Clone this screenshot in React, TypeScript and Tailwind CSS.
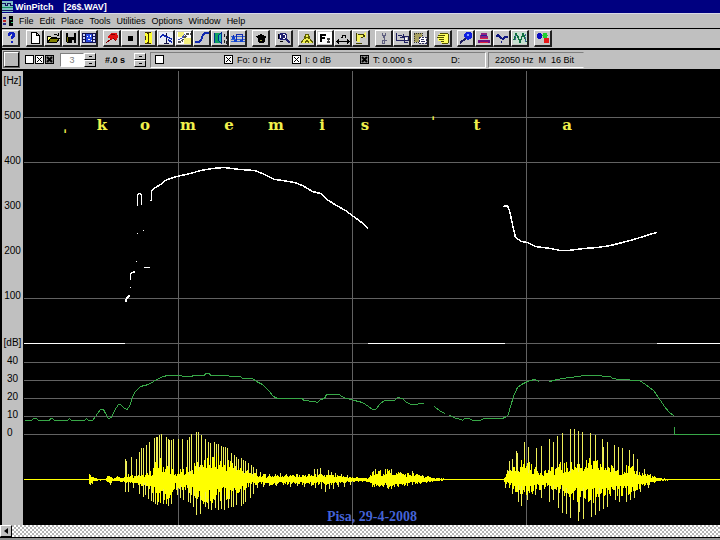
import React, { useMemo } from 'react';
import clsx from 'clsx';

type Point = [number, number];
type Band = [number, number, number];

const MENU_ITEMS = ['File', 'Edit', 'Place', 'Tools', 'Utilities', 'Options', 'Window', 'Help'];

// Glyphs are drawn on a 14x12 grid
const ICONS: Record<string, React.ReactNode> = {
  Help: <path d="M5 4V2h1V1h3v1h1v2H9v1H8v2M8 9v2" stroke="#1020c0" strokeWidth="2" />,
  New: <path d="M3.5 .5h5l3 3v8h-8zM8.5 .5v3h3" fill="#fff" stroke="#000" />,
  Open: (
    <>
      <path d="M1.5 10.5v-6h3l1 1h5v2" fill="#ffff80" stroke="#000" />
      <path d="M1.5 10.5l3-4h9l-3 4z" fill="#808000" stroke="#000" />
      <path d="M8 2.5h2l2 1M12 1v3" stroke="#000" />
    </>
  ),
  Save: (
    <>
      <path d="M2 1h10v10H3l-1-1z" fill="#000" />
      <path d="M4 1h6v4H4zM8 8h2v3H8z" fill="#c0c0c0" />
      <path d="M3 5h1v5H3z" fill="#707000" />
    </>
  ),
  Table: (
    <>
      <path d="M0 1h14v10H0z" fill="#101050" />
      <path d="M1 2h2v2H1zM1 5h2v2H1zM1 8h2v2H1zM11 2h2v2h-2zM11 5h2v2h-2zM11 8h2v2h-2z" fill="#d0d8ff" />
      <path d="M4 2h6v8H4z" fill="#2848e0" />
      <path d="M5 4h1v1H5zM8 3h1v2H8zM6 7h2v1H6zM9 8h1v1H9z" fill="#fff" />
    </>
  ),
  Pin: (
    <>
      <path d="M1 11l5-4" stroke="#800000" strokeWidth="1" />
      <path d="M4 3l3-2h5l1 3-1 4-2 1-2-2-2 1-1-2H3z" fill="#e01010" />
      <path d="M8 6l3 3M6 3l4-1" stroke="#800000" />
    </>
  ),
  Stop: <path d="M5 4h5v5H5z" fill="#000" />,
  Cursor: (
    <>
      <path d="M4 0h7v12H4z" fill="#ffff30" />
      <path d="M4 .5h2l1 1 1-1h2M7 2v8M4 11.5h2l1-1 1 1h2M4 4v4" stroke="#403000" />
    </>
  ),
  Split: (
    <>
      <path d="M0 0h14v12H0z" fill="#e8ecf4" />
      <path d="M7.500 1v10M5 11.500h5" stroke="#101040" />
      <path d="M1 5l3-2 4 2 5 2M9 8l4 2" stroke="#1028b0" strokeWidth="1.500" />
    </>
  ),
  Highlight: (
    <>
      <path d="M0 0h14v12H0z" fill="#fff" />
      <path d="M7 6h7v6H7zM1 0h6v5H1z" fill="#f4f080" />
      <path d="M1 10h3l4-5 2-3h4" stroke="#505050" strokeWidth="2" strokeDasharray="3 1" />
      <path d="M1 8l4-2 3-4" stroke="#4050c0" />
    </>
  ),
  Curve: <path d="M0 10h4l2-2 2-5 2-2h4" stroke="#1028b0" strokeWidth="2" />,
  Speaker: (
    <>
      <path d="M1 1h8v10H1z" fill="#10a060" />
      <path d="M1 1v10M8 1L5 4v4l3 3z" stroke="#003090" fill="#20c0b0" />
      <path d="M11 2v3M13 4v3M11 8v3M13 9v3" stroke="#202020" />
    </>
  ),
  Notes: (
    <>
      <path d="M0 4h14M0 7h14M0 9.5h14" stroke="#3060d0" />
      <path d="M5 9V2h6v7M2 3v4" stroke="#1028b0" />
      <path d="M3 8h3v2H3zM9 8h3v2H9zM1 5h3v2H1z" fill="#1040d0" />
    </>
  ),
  Tutor: (
    <>
      <path d="M1 5l6-3 6 3-2 1v4l-2 1H6l-2-1V6z" fill="#000" />
      <path d="M6 8h2v1H6z" fill="#a0a040" />
    </>
  ),
  Search: (
    <>
      <circle cx="6" cy="4.500" r="3.500" fill="#fff" stroke="#202070" />
      <path d="M9 7l4 4M5 2v5M7 3v3" stroke="#202070" strokeWidth="1.500" />
      <path d="M1 2v5M3 9h3" stroke="#000" />
    </>
  ),
  Tripod: <path d="M1 11l3-4 2-5h2l2 5 3 4M4 7l3-2 3 2M5 11l2-3 2 3" stroke="#606000" fill="#f0f050" />,
  Font: (
    <>
      <path d="M0 0h14v12H0z" fill="#fff" />
      <path d="M2 2h2v8H2zM4 2h4v2H4zM4 5h3v2H4z" fill="#000" />
      <path d="M9 6h3v2h-1v1h1v2H9V9h1V8H9z" fill="#404040" />
    </>
  ),
  Width: (
    <>
      <path d="M1 9.500h12M3 7.500l-2 2 2 2M11 7.500l2 2-2 2" stroke="#000" />
      <path d="M5 5h1V3h3v2h1" stroke="#000" />
    </>
  ),
  Lamp: (
    <>
      <path d="M3 2h6l3-2v6l-3-1H6v5H3z" fill="#f4f060" />
      <path d="M2.500 1v8M2 11h6M4 2h4l3 2-4 2" stroke="#404000" />
    </>
  ),
  Cut: <path d="M5 1l2 5 2-5M7 6v2M5 8h2v3H5zM8 8h2" stroke="#606080" />,
  Copy: (
    <>
      <path d="M1.500 1v7h3M5 5.500h3l1-3M3 3h3l2 2M5 8h8V4H9v6h4" stroke="#202060" />
      <path d="M10 6h2v2h-2z" fill="#fff" />
    </>
  ),
  Paste: (
    <>
      <path d="M1 1h8v9H1z" fill="#a8a060" />
      <path d="M1 1h8v9H1z" stroke="#303030" strokeDasharray="1 1" />
      <path d="M6 5h7v6H6z" fill="#fff" stroke="#303060" strokeDasharray="2 1" />
      <path d="M8 7h3M8 9h4" stroke="#303060" />
    </>
  ),
  Undo: (
    <>
      <path d="M4 1h7l1 1v8l-1 1H5V9H2V4z" fill="#ffff60" />
      <path d="M4 1.500h7l1.500 1v8l-1.500 1H6M2 3.500h7M1 5.500h7M3 7.500h5M5 9.500h3" stroke="#505000" />
    </>
  ),
  Marker: (
    <>
      <path d="M7 6l-6 5" stroke="#202060" strokeWidth="2" />
      <path d="M5 2l3-2h3l2 2v3l-2 2-3 1-3-3z" fill="#1020e0" />
      <path d="M8 2h2v2H8z" fill="#80a0ff" />
    </>
  ),
  Hat: (
    <>
      <path d="M4 1h6l1 5H3z" fill="#902080" />
      <path d="M1 8h12v3H1z" fill="#701080" />
      <path d="M3 6.500h8M3 10.500h8" stroke="#e02040" />
      <path d="M4 3.500h6" stroke="#2020a0" />
    </>
  ),
  Wave: <path d="M1 5l2-2 3 3 2 1 2-2 3 0M6 10h1" stroke="#101880" strokeWidth="2" />,
  Spectrum: (
    <>
      <path d="M0 0h14v12H0z" fill="#c8e0d0" />
      <path d="M1 8l2-6 2 3 2 5 3-8 2 4 1 4" stroke="#107040" strokeWidth="1.500" />
      <path d="M2 3v6M12 2v8" stroke="#4060a0" strokeDasharray="2 1" />
    </>
  ),
  Colors: (
    <>
      <circle cx="3.500" cy="4" r="2.800" fill="#1010c0" />
      <circle cx="9" cy="3.500" r="2.600" fill="#20d030" />
      <circle cx="10.500" cy="8.500" r="2.900" fill="#e81818" />
    </>
  ),
};

const TOOL_GROUPS = [
  ['New', 'Open', 'Save', 'Table'],
  ['Pin', 'Stop', 'Cursor', 'Split', 'Highlight', 'Curve', 'Speaker', 'Notes'],
  ['Tutor'],
  ['Search'],
  ['Tripod', 'Font', 'Width', 'Lamp'],
  ['Cut', 'Copy', 'Paste'],
  ['Undo'],
  ['Marker', 'Hat', 'Wave', 'Spectrum'],
  ['Colors'],
];

// Plot coordinates, x 24-720 and y 71-525
const PITCH: Point[][] = [
  [[125, 302], [126, 298], [128, 296], [129, 295]],
  [[129, 287], [130, 287]],
  [[130, 279], [130, 273], [132, 272], [135, 271]],
  [[135, 261], [136, 261]],
  [[136, 233], [137, 233]],
  [[142, 230], [143, 230]],
  [[143, 267], [149, 267]],
  [[137, 205], [137, 195], [138, 193], [140, 193], [141, 195], [141, 204]],
  [[149, 200], [151, 200], [151, 190], [155, 187], [160, 184], [165, 180], [170, 178], [176, 176], [190, 173], [200, 170], [212, 168], [223, 167], [240, 169], [254, 170], [262, 173], [270, 177], [274, 179], [282, 180], [294, 182], [302, 185], [312, 191], [320, 193], [328, 200], [336, 205], [345, 210], [353, 216], [360, 221], [368, 228]],
  [[503, 206], [507, 205], [509, 210], [512, 224], [515, 237], [521, 241], [527, 242], [535, 246], [550, 248], [560, 250], [568, 250], [583, 248], [597, 247], [610, 245], [622, 242], [633, 239], [643, 236], [652, 233], [657, 232]],
];

const INTENSITY: Point[][] = [
  [[24, 420], [31, 420], [33, 418], [36, 418], [38, 420], [49, 420], [50, 418], [52, 418], [54, 420], [67, 420], [69, 418], [71, 420], [84, 420], [86, 418], [88, 420], [92, 420], [95, 416], [97, 413], [100, 409], [103, 409], [105, 413], [108, 418], [111, 417], [114, 410], [118, 404], [120, 404], [123, 407], [126, 409], [128, 408], [130, 403], [132, 396], [135, 391], [140, 386], [148, 384], [153, 381], [158, 378], [163, 376], [167, 375], [180, 375], [183, 376], [190, 376], [194, 375], [204, 375], [205, 373], [209, 373], [210, 375], [228, 375], [229, 376], [240, 376], [242, 378], [252, 378], [256, 381], [262, 384], [268, 390], [273, 396], [277, 398], [302, 398], [303, 400], [314, 401], [317, 402], [320, 399], [324, 398], [326, 394], [339, 394], [341, 396], [346, 398], [351, 399], [354, 400], [362, 402], [368, 406], [372, 409], [375, 409], [380, 403], [384, 400], [394, 400], [397, 397], [402, 398], [406, 402], [411, 404], [424, 403]],
  [[434, 406], [440, 411], [445, 413]],
  [[449, 415], [456, 418], [461, 419], [462, 420], [464, 418], [469, 418], [472, 420], [480, 420], [483, 418], [502, 418], [506, 416], [508, 414], [510, 406], [513, 396], [517, 387], [521, 384], [527, 381], [530, 380], [534, 379], [539, 381]],
  [[549, 381], [557, 379], [568, 377], [580, 376], [581, 375], [592, 375], [610, 376], [612, 378], [619, 379], [639, 380], [645, 384], [653, 390], [658, 397], [664, 406], [668, 411], [674, 416]],
  [[674, 426], [674, 434], [720, 434]],
];

// Dense part of the signal: x, height above zero line, depth below it
const CORE: Band[] = [
  [24, 0, 0], [88, 0, 0], [89, 4, 5], [91, 4, 4], [94, 1, 1], [105, 0, 0], [107, 3, 2], [110, 3, 4], [113, 1, 1], [117, 3, 1], [120, 1, 2], [122, 1, 2], [124, 5, 3], [135, 3, 3], [148, 5, 8], [152, 10, 13], [158, 20, 20], [165, 14, 22], [171, 12, 18], [174, 5, 8], [185, 11, 9], [190, 9, 12], [196, 16, 18], [205, 18, 22], [215, 22, 18], [230, 17, 18], [240, 12, 12], [250, 6, 5], [262, 4, 4], [300, 4, 4], [330, 4, 5], [350, 2, 2], [368, 1, 2], [372, 6, 6], [385, 9, 8], [400, 6, 6], [415, 5, 4], [425, 3, 3], [435, 1, 1], [450, 0, 0], [503, 0, 0], [505, 4, 4], [515, 12, 10], [524, 20, 15], [530, 14, 14], [537, 9, 9], [548, 9, 7], [560, 14, 12], [575, 15, 18], [590, 18, 21], [600, 16, 18], [615, 11, 14], [630, 12, 15], [636, 8, 12], [643, 6, 7], [650, 4, 4], [658, 1, 1], [674, 0, 0], [720, 0, 0],
];

const PEAKS: Point[] = [
  [89, 4], [107, 3], [125, 20], [126, 18], [131, 22], [136, 20], [139, 27], [141, 31], [143, 31], [146, 34], [149, 37], [154, 41], [156, 42], [157, 42], [159, 44], [161, 45], [166, 42], [168, 40], [169, 39], [171, 39], [173, 40], [178, 40], [182, 40], [187, 39], [189, 42], [191, 45], [196, 47], [198, 47], [201, 44], [205, 40], [208, 37], [210, 36], [214, 37], [216, 35], [218, 35], [221, 33], [223, 32], [225, 32], [227, 31], [231, 26], [234, 24], [236, 22], [238, 20], [241, 21], [243, 19], [245, 18], [248, 16], [251, 14], [253, 12], [256, 10], [260, 7], [265, 5], [269, 5], [275, 5], [280, 6], [286, 5], [292, 4], [297, 5], [303, 4], [308, 5], [314, 10], [317, 10], [320, 11], [324, 4], [328, 9], [331, 7], [335, 6], [341, 5], [347, 4], [373, 8], [375, 10], [379, 8], [385, 10], [391, 10], [400, 7], [412, 8], [422, 4], [507, 9], [509, 18], [512, 20], [516, 28], [517, 26], [524, 37], [528, 32], [536, 31], [541, 33], [549, 40], [553, 37], [557, 43], [562, 46], [570, 50], [574, 50], [578, 48], [582, 47], [590, 46], [595, 44], [602, 40], [603, 32], [607, 37], [614, 34], [618, 32], [622, 31], [629, 29], [633, 25], [637, 20], [644, 10], [650, 5],
];

const TROUGHS: Point[] = [
  [90, 5], [110, 5], [125, 12], [128, 12], [133, 8], [139, 14], [143, 17], [145, 15], [148, 19], [151, 21], [153, 22], [155, 24], [157, 25], [160, 22], [163, 24], [168, 26], [171, 24], [177, 15], [180, 18], [183, 20], [188, 22], [190, 23], [193, 27], [196, 35], [200, 34], [205, 27], [208, 29], [211, 30], [215, 28], [218, 30], [221, 29], [224, 30], [228, 28], [231, 27], [233, 27], [236, 25], [241, 26], [243, 24], [245, 22], [250, 18], [253, 14], [257, 8], [263, 7], [269, 6], [276, 6], [283, 5], [290, 7], [297, 6], [304, 7], [311, 6], [315, 8], [321, 9], [325, 12], [329, 9], [333, 9], [338, 7], [344, 7], [350, 5], [372, 7], [387, 8], [394, 7], [412, 5], [505, 8], [512, 14], [518, 22], [521, 26], [527, 20], [535, 15], [541, 18], [549, 22], [553, 20], [558, 28], [562, 33], [566, 34], [570, 38], [578, 41], [579, 32], [583, 39], [591, 37], [595, 35], [599, 31], [603, 29], [607, 27], [615, 20], [619, 22], [626, 22], [630, 20], [634, 18], [640, 12], [648, 8], [654, 3],
];

const PHONES = [
  { char: 'ˌ', x: 65, y: 127 },
  { char: 'k', x: 102, y: 125 },
  { char: 'o', x: 145, y: 125 },
  { char: 'm', x: 188, y: 125 },
  { char: 'e', x: 229, y: 125 },
  { char: 'm', x: 276, y: 125 },
  { char: 'i', x: 322, y: 125 },
  { char: 's', x: 365, y: 125 },
  { char: 'ˈ', x: 433, y: 123 },
  { char: 't', x: 477, y: 125 },
  { char: 'a', x: 567, y: 125 },
];

const ZERO_Y = 479;

const toPath = (lines: Point[][]) =>
  lines.map((line) => 'M' + line.map(([x, y]) => `${x} ${y}`).join('L')).join('');

const jitter = (x: number) => {
  const v = Math.sin(x * 12.9898) * 43758.5453;
  return v - Math.floor(v);
};

const buildSignal = () => {
  let d = '';
  for (let x = 24; x < 720; x++) {
    const i = Math.max(1, CORE.findIndex((band) => band[0] > x));
    const [x0, up0, down0] = CORE[i - 1];
    const [x1, up1, down1] = CORE[i];
    const t = (x - x0) / (x1 - x0);
    const up = Math.round((up0 + (up1 - up0) * t) * (0.35 + 0.85 * jitter(x)));
    const down = Math.round((down0 + (down1 - down0) * t) * (0.4 + 0.8 * jitter(x + 900)));
    d += `M${x}.5 ${ZERO_Y - up}V${ZERO_Y + 1 + down}`;
  }
  return d;
};

const ToolButton: React.FC<{ name: string }> = ({ name }) => (
  <button
    type="button"
    aria-label={name}
    className="flex h-[17px] w-[18px] shrink-0 items-center justify-center border-t border-r-2 border-b-2 border-l border-t-white border-r-[#202020] border-b-[#202020] border-l-white bg-[#c8c8c8]"
  >
    <svg viewBox="0 0 14 12" className="h-3 w-[14px]" fill="none" shapeRendering="crispEdges">
      {ICONS[name]}
    </svg>
  </button>
);

const CheckBox: React.FC<{ label: string; text?: string; checked?: boolean; dark?: boolean }> = ({
  label,
  text,
  checked,
  dark,
}) => (
  <label className="flex items-center gap-1 whitespace-pre">
    <span className="grid">
      <input
        type="checkbox"
        aria-label={label}
        defaultChecked={checked}
        className={clsx(
          'peer col-start-1 row-start-1 size-[9px] appearance-none border border-black',
          dark ? 'bg-[#909090]' : 'bg-white'
        )}
      />
      <svg viewBox="0 0 9 9" className="pointer-events-none invisible col-start-1 row-start-1 size-[9px] peer-checked:visible">
        <path d="M2 2l5 5M7 2l-5 5" stroke="#000" strokeWidth={dark ? 2 : 1} />
      </svg>
    </span>
    {text}
  </label>
);

const Spinner: React.FC<{ label: string }> = ({ label }) => (
  <div className="flex w-3 flex-col">
    {['Increase', 'Decrease'].map((dir) => (
      <button
        key={dir}
        type="button"
        aria-label={`${dir} ${label}`}
        className="flex h-[7px] items-center justify-center border border-t-white border-r-black border-b-black border-l-white bg-[#c0c0c0]"
      >
        <span className="h-px w-[3px] bg-black" />
      </button>
    ))}
  </div>
);

const TitleBar = () => (
  <header className="flex h-[13px] items-center gap-[2px] bg-[#000080] text-[9px] leading-3 font-bold text-white">
    <svg viewBox="0 0 11 11" className="size-[11px]" shapeRendering="crispEdges">
      <path d="M0 0h11v11H0z" fill="#80c0c8" />
      <path d="M0 2h3v2h2V2h3v2h3M0 9h11" stroke="#101060" fill="none" />
      <path d="M0 6h11v1H0z" fill="#109060" />
    </svg>
    <h1 className="whitespace-pre">{'WinPitch    [26$.WAV]'}</h1>
  </header>
);

const MenuBar = () => (
  <nav className="flex h-[15px] items-center gap-[6px] border-t border-[#d8d8e8] text-[9px] leading-3">
    <svg viewBox="0 0 12 10" className="mr-[-1px] h-[10px] w-3" shapeRendering="crispEdges">
      <path d="M1 1h3v2H1zM1 7h3v2H1z" fill="#202080" />
      <path d="M1 4h3v2H1z" fill="#c02020" />
      <path d="M7 0h4v10H7z" fill="#000" />
      <path d="M8 3h2v1H8zM9 6h2v1H9z" fill="#30c070" />
    </svg>
    {MENU_ITEMS.map((item) => (
      <a key={item} href="#" className="text-black">
        {item}
      </a>
    ))}
  </nav>
);

const ToolBar = () => (
  <div className="flex h-[22px] items-center gap-[5px] border-t border-b-2 border-black">
    <div className="mr-px">
      <ToolButton name="Help" />
    </div>
    {TOOL_GROUPS.map((group, i) => (
      <div key={i} className="flex">
        {group.map((name) => (
          <ToolButton key={name} name={name} />
        ))}
      </div>
    ))}
  </div>
);

const StatusRow = () => (
  <div className="flex h-5 items-center border-b border-black text-[9px] leading-3 font-medium">
    <button
      type="button"
      aria-label="Mode"
      className="ml-[2px] size-[15px] border border-t-white border-r-black border-b-black border-l-white bg-[#b8b8b8] outline outline-[#606060]"
    />
    <div className="ml-[6px] flex gap-px">
      <CheckBox label="Grid" />
      <CheckBox label="Pitch" checked />
      <CheckBox label="Intensity" checked dark />
    </div>
    <input
      aria-label="Channel"
      defaultValue="3"
      className="ml-[6px] h-[14px] w-6 border border-t-[#808080] border-r-white border-b-white border-l-[#808080] bg-white text-center text-[#808080]"
    />
    <Spinner label="channel" />
    <span className="ml-[9px] w-[29px] font-bold">#.0 s</span>
    <Spinner label="time" />
    <div className="ml-1 flex h-4 w-[336px] items-center border border-t-[#808080] border-r-white border-b-white border-l-[#808080] pl-1">
      <div className="w-[69px]">
        <CheckBox label="Lock" />
      </div>
      <div className="w-[68px]">
        <CheckBox label="Frequency" text="Fo: 0 Hz" checked />
      </div>
      <div className="w-[68px]">
        <CheckBox label="Level" text="I: 0 dB" checked />
      </div>
      <div className="w-[91px]">
        <CheckBox label="Time" text="T: 0.000 s" checked dark />
      </div>
      <span>D:</span>
    </div>
    <div className="ml-[2px] flex h-4 w-24 items-center border border-t-[#808080] border-r-transparent border-b-white border-l-[#808080] pl-[6px] whitespace-pre">
      22050 Hz  M  16 Bit
    </div>
  </div>
);

const Axis = () => (
  <div className="flex w-[21px] shrink-0 flex-col bg-[#c0c0c0] text-center text-[10px]">
    <span className="flex h-[18px] items-center justify-center">[Hz]</span>
    <div className="mt-1">
      {[500, 400, 300, 200, 100].map((hz) => (
        <span key={hz} className="flex h-[45px] items-center justify-center">
          {hz}
        </span>
      ))}
    </div>
    <div className="mt-[15px]">
      <span className="flex h-[18px] items-center justify-center">[dB]</span>
      {[40, 30, 20, 10].map((db) => (
        <span key={db} className="flex h-[18px] items-center justify-center">
          {db}
        </span>
      ))}
      <span className="flex h-[18px] items-center pl-[5px]">0</span>
    </div>
  </div>
);

const Plot = () => {
  const signal = useMemo(buildSignal, []);

  return (
    <div className="relative ml-px h-[454px] min-w-0 flex-1 overflow-hidden bg-black">
      <svg
        viewBox="24 71 696 454"
        preserveAspectRatio="none"
        className="block h-full w-full"
        fill="none"
        shapeRendering="crispEdges"
      >
        <g stroke="#626262">
          {[117, 162, 298, 343, 362, 380, 398, 416, 434].map((y) => (
            <path key={y} d={`M24 ${y}.5H720`} />
          ))}
          {[178, 352, 526].map((x) => (
            <path key={x} d={`M${x}.5 71V525`} />
          ))}
        </g>
        <path d="M24 343.5H125M368 343.5H505M657 343.5H720" stroke="#fff" />
        <path d={toPath(PITCH)} transform="translate(0.5 0.5)" stroke="#fff" strokeWidth="1.5" />
        <path d={toPath(INTENSITY)} transform="translate(0.5 0.5)" stroke="#38a848" />
        <path
          d={
            PEAKS.map(([x, h]) => `M${x}.5 ${ZERO_Y}V${ZERO_Y - h}`).join('') +
            TROUGHS.map(([x, h]) => `M${x}.5 ${ZERO_Y}V${ZERO_Y + 1 + h}`).join('')
          }
          stroke="#eeee58"
        />
        <path d={signal} stroke="#ffff00" />
      </svg>

      {PHONES.map(({ char, x, y }) => (
        <span
          key={x}
          className="absolute -translate-x-1/2 -translate-y-1/2 font-['DejaVu_Serif',serif] text-[15px] leading-4 font-bold text-[#f0f04c]"
          style={{ left: `${((x - 24) / 696) * 100}%`, top: y - 71 }}
        >
          {char}
        </span>
      ))}
      <p className="absolute bottom-0 left-1/2 -translate-x-1/2 font-['Liberation_Serif',serif] text-[14px] leading-4 font-bold text-[#4463d6]">
        Pisa, 29-4-2008
      </p>
    </div>
  );
};

const ScrollBar = () => (
  <div className="flex h-3 bg-[repeating-conic-gradient(#ffffff_0_25%,#b4b4b4_0_50%)] bg-[length:4px_4px]">
    <button
      type="button"
      aria-label="Scroll left"
      className="flex w-3 items-center justify-center border border-t-white border-r-black border-b-black border-l-white bg-[#c0c0c0]"
    >
      <svg viewBox="0 0 4 6" className="h-[6px] w-1">
        <path d="M4 0v6L0 3z" fill="#000" />
      </svg>
    </button>
  </div>
);

export default function App() {
  return (
    <div className="min-h-screen bg-[#909090] font-['Liberation_Sans',Arial,sans-serif] text-black">
      <div className="bg-[#c0c0c0]">
        <div className="border-l-2 border-black">
          <TitleBar />
          <MenuBar />
          <ToolBar />
          <StatusRow />
        </div>
        <main className="flex border-t border-l-2 border-black bg-black">
          <Axis />
          <Plot />
        </main>
        <ScrollBar />
        <div className="border-t border-black" />
      </div>
    </div>
  );
}
